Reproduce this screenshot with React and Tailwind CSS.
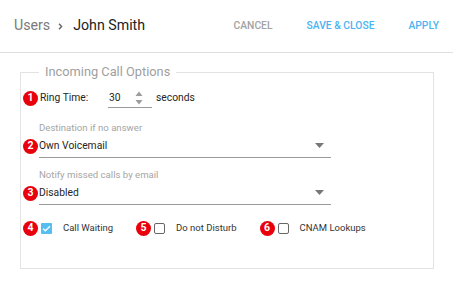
const Badge = ({ n }) => (
    <span className="ml-[2px] flex h-[15px] w-[15px] shrink-0 items-center justify-center rounded-full bg-[#e8000c] text-[10.5px] font-bold leading-none text-white">
        {n}
    </span>
)

const Caret = () => (
    <svg width="9" height="5" viewBox="0 0 9 5" className="mr-[7px]">
        <path d="M0 0h9L4.5 5z" fill="#777" />
    </svg>
)

const Select = ({ n, label, value, top }) => (
    <div className={top}>
        <div className="pl-[18px] text-[9.6px] leading-[12px] text-[#a5a5a5]">{label}</div>
        <div className="flex h-[24px] items-center">
            <Badge n={n} />
            <div className="ml-[1px] flex h-[24px] w-[292px] items-center justify-between border-b border-[#9a9a9a]">
                <span className="text-[10.3px] text-[#262626]">{value}</span>
                <Caret />
            </div>
        </div>
    </div>
)

const Check = ({ n, label, checked }) => (
    <div className="flex items-center">
        <Badge n={n} />
        {checked ? (
            <span className="ml-[3px] flex h-[11px] w-[11px] items-center justify-center rounded-[1px] bg-[#55bdf2]">
                <svg width="9" height="7" viewBox="0 0 9 7">
                    <path d="M1 3.6l2.3 2.2L8 1.2" fill="none" stroke="#fff" strokeWidth="1.3" />
                </svg>
            </span>
        ) : (
            <span className="ml-[3px] h-[11px] w-[11px] rounded-[2px] border-[1.5px] border-[#666]" />
        )}
        <span className="ml-[11px] text-[9.5px] text-[#333]">{label}</span>
    </div>
)

export default function App() {
    return (
        <div className="h-[281px] w-[453px] bg-white font-['Roboto',sans-serif]">
            <div className="flex h-[53px] items-center border-b border-[#dedede] pl-[14px] pr-[14px]">
                <span className="text-[14.2px] text-[#7a7a7a]">Users</span>
                <svg width="5" height="7" viewBox="0 0 5 7" className="ml-[8px] mt-[1px]">
                    <path d="M1 0.8l2.6 2.7L1 6.2" fill="none" stroke="#666" strokeWidth="1.4" />
                </svg>
                <span className="ml-[10px] text-[14.2px] text-[#222]">John Smith</span>
                <div className="ml-auto flex items-center gap-[34px] text-[10.3px] font-medium">
                    <span className="text-[#a3a3a3]">CANCEL</span>
                    <span className="text-[#4db4f2]">SAVE &amp; CLOSE</span>
                    <span className="text-[#4db4f2]">APPLY</span>
                </div>
            </div>

            <div className="pl-[20px] pt-[11px]">
                <fieldset className="w-[414px] border border-[#e3e3e3] pb-[32px] pt-[8px]">
                    <legend className="ml-[18px] px-[6px] text-[12.8px] leading-[16px] text-[#a0a0a0]">
                        Incoming Call Options
                    </legend>

                    <div className="flex h-[20px] items-center">
                        <Badge n={1} />
                        <span className="ml-[2px] w-[68px] text-[10.3px] text-[#262626]">Ring Time:</span>
                        <div className="flex h-[20px] w-[44px] items-center border-b border-[#9a9a9a]">
                            <span className="ml-[1px] text-[10.3px] text-[#262626]">30</span>
                            <svg width="8" height="16" viewBox="0 0 8 16" className="ml-[14px]">
                                <path d="M0.5 6L4 1.5L7.5 6z" fill="#9c9c9c" />
                                <path d="M0.5 10L4 14.5L7.5 10z" fill="#9c9c9c" />
                            </svg>
                        </div>
                        <span className="ml-[4px] text-[10.3px] text-[#262626]">seconds</span>
                    </div>

                    <Select top="mt-[14px]" n={2} label="Destination if no answer" value="Own Voicemail" />
                    <Select top="mt-[11px]" n={3} label="Notify missed calls by email" value="Disabled" />

                    <div className="mt-[15px] flex h-[16px] items-center gap-[21px]">
                        <Check n={4} label="Call Waiting" checked />
                        <Check n={5} label="Do not Disturb" />
                        <Check n={6} label="CNAM Lookups" />
                    </div>
                </fieldset>
            </div>
        </div>
    )
}
